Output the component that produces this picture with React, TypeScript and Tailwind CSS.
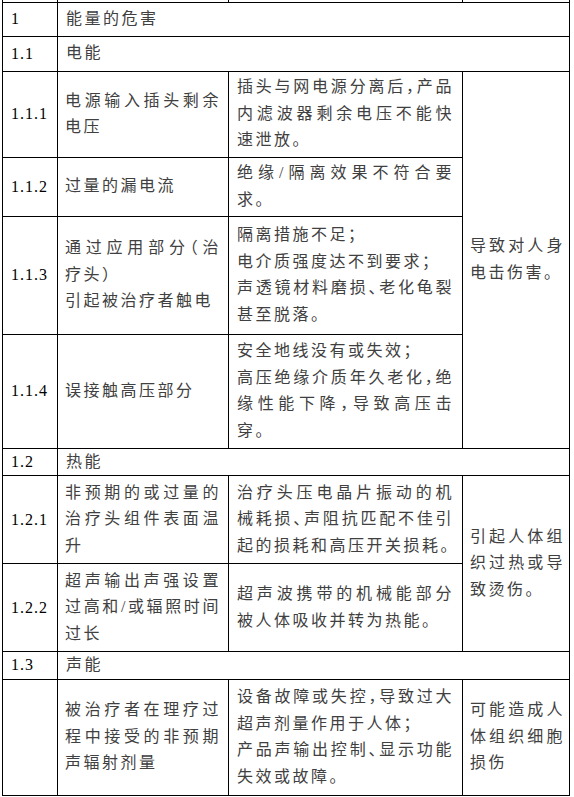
import type { ReactNode } from "react";

type Row =
  | { kind: "head"; no: string; title: string; h: string }
  | {
      kind: "item";
      no: string;
      hazard: ReactNode;
      cause: ReactNode;
      h: string;
      effect?: { text: string; span: number };
    };

const rows: Row[] = [
  { kind: "head", no: "1", title: "能量的危害", h: "h-[34px]" },
  { kind: "head", no: "1.1", title: "电能", h: "h-[35px]" },
  {
    kind: "item",
    no: "1.1.1",
    hazard: "电源输入插头剩余电压",
    cause: "插头与网电源分离后，产品内滤波器剩余电压不能快速泄放。",
    h: "h-[86px]",
    effect: { text: "导致对人身电击伤害。", span: 4 },
  },
  {
    kind: "item",
    no: "1.1.2",
    hazard: "过量的漏电流",
    cause: "绝缘/隔离效果不符合要求。",
    h: "h-[59px]",
  },
  {
    kind: "item",
    no: "1.1.3",
    hazard: (
      <>
        通过应用部分（治疗头）
        <br />
        引起被治疗者触电
      </>
    ),
    cause: (
      <>
        隔离措施不足；
        <br />
        电介质强度达不到要求；
        <br />
        声透镜材料磨损、老化龟裂甚至脱落。
      </>
    ),
    h: "h-[118px]",
  },
  {
    kind: "item",
    no: "1.1.4",
    hazard: "误接触高压部分",
    cause: (
      <>
        安全地线没有或失效；
        <br />
        高压绝缘介质年久老化，绝缘性能下降，导致高压击穿。
      </>
    ),
    h: "h-[114px]",
  },
  { kind: "head", no: "1.2", title: "热能", h: "h-[27px]" },
  {
    kind: "item",
    no: "1.2.1",
    hazard: "非预期的或过量的治疗头组件表面温升",
    cause: "治疗头压电晶片振动的机械耗损、声阻抗匹配不佳引起的损耗和高压开关损耗。",
    h: "h-[88px]",
    effect: { text: "引起人体组织过热或导致烫伤。", span: 2 },
  },
  {
    kind: "item",
    no: "1.2.2",
    hazard: "超声输出声强设置过高和/或辐照时间过长",
    cause: "超声波携带的机械能部分被人体吸收并转为热能。",
    h: "h-[88px]",
  },
  { kind: "head", no: "1.3", title: "声能", h: "h-[27px]" },
  {
    kind: "item",
    no: "",
    hazard: "被治疗者在理疗过程中接受的非预期声辐射剂量",
    cause: (
      <>
        设备故障或失控，导致过大超声剂量作用于人体；
        <br />
        产品声输出控制、显示功能失效或故障。
      </>
    ),
    h: "h-[116px]",
    effect: { text: "可能造成人体组织细胞损伤", span: 1 },
  },
];

// 中文单元格：两端对齐，标点半角（halt），字距略放大
const zh =
  "border border-black align-middle text-justify text-[16px] leading-[26.5px] tracking-[2.5px] text-[#404040] [font-feature-settings:'halt']";
const num =
  "border border-black align-middle pl-[8px] text-[16px] tracking-[1px] text-black";

export default function App() {
  return (
    <div className="h-[797px] w-[574px] overflow-hidden bg-white font-['Liberation_Serif','Noto_Sans_CJK_SC',serif]">
      <table className="ml-[2px] w-[567px] table-fixed border-collapse">
        <colgroup>
          <col className="w-[55px]" />
          <col className="w-[171px]" />
          <col className="w-[234px]" />
          <col className="w-[107px]" />
        </colgroup>
        <tbody>
          {/* 上一页表格的残留 */}
          <tr className="h-[2px]">
            <td className="border-x border-b border-black p-0" />
            <td className="border-x border-b border-black p-0" />
            <td className="border-x border-b border-black p-0" />
            <td className="border-x border-b border-black p-0" />
          </tr>
          {rows.map((r) =>
            r.kind === "head" ? (
              <tr key={r.no} className={r.h}>
                <td className={`${num} py-0`}>{r.no}</td>
                <td colSpan={3} className={`${zh} py-0 pl-[8px]`}>
                  {r.title}
                </td>
              </tr>
            ) : (
              <tr key={r.no || "last"} className={r.h}>
                <td className={`${num} py-0`}>{r.no}</td>
                <td className={`${zh} py-0 pl-[7px] pr-[7px]`}>{r.hazard}</td>
                <td className={`${zh} py-0 pl-[8px] pr-[8px]`}>{r.cause}</td>
                {r.effect && (
                  <td rowSpan={r.effect.span} className={`${zh} py-0 pl-[7px] pr-[4px]`}>
                    {r.effect.text}
                  </td>
                )}
              </tr>
            ),
          )}
        </tbody>
      </table>
    </div>
  );
}
